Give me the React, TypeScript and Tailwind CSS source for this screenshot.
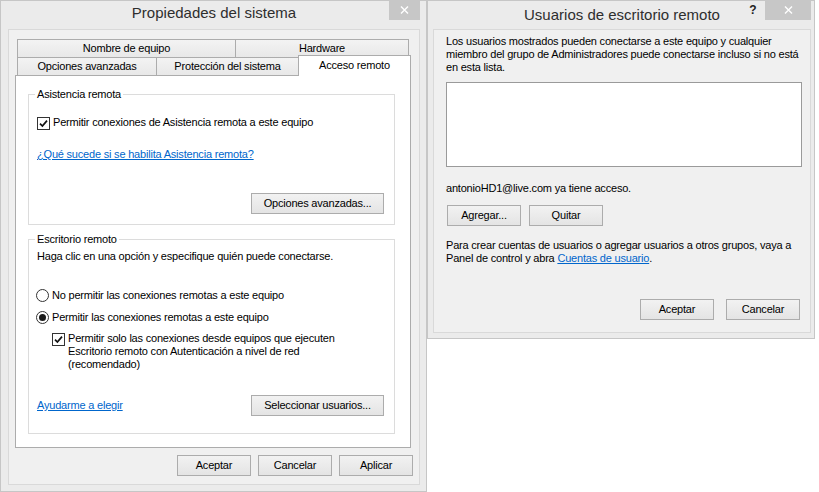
import React from "react";

function Btn({ children, className = "" }: { children: React.ReactNode; className?: string }) {
  return (
    <div
      className={`flex h-[21px] w-[74px] shrink-0 items-center justify-center border border-[#acacac] bg-linear-to-b from-[#f2f2f2] to-[#e4e4e4] leading-[13px] text-black ${className}`}
    >
      {children}
    </div>
  );
}

function CloseBtn({ className = "" }: { className?: string }) {
  return (
    <div className={`flex h-[20px] shrink-0 items-center justify-center bg-[#c7c7c7] ${className}`}>
      <svg width="9" height="8" viewBox="0 0 9 8">
        <path d="M1 0.5L8 7.5M8 0.5L1 7.5" stroke="#ffffff" strokeWidth="1.4" />
      </svg>
    </div>
  );
}

function Check() {
  return (
    <span className="mt-px flex h-[13px] w-[13px] shrink-0 items-center justify-center border border-[#333333] bg-white">
      <svg width="9" height="9" viewBox="0 0 9 9">
        <path d="M1 4.6L3.4 7L8 1.6" stroke="#111111" strokeWidth="1.7" fill="none" />
      </svg>
    </span>
  );
}

function Radio({ on }: { on?: boolean }) {
  return (
    <span className="flex h-[13px] w-[13px] shrink-0 items-center justify-center rounded-full border border-[#333333] bg-white">
      {on && <span className="h-[7px] w-[7px] rounded-full bg-[#1a1a1a]" />}
    </span>
  );
}

function Tab({ children, className = "" }: { children: React.ReactNode; className?: string }) {
  return (
    <div
      className={`flex h-[18px] shrink-0 justify-center border border-b-0 border-[#acacac] bg-linear-to-b from-[#f3f3f3] to-[#e8e8e8] pt-[2px] leading-[13px] ${className}`}
    >
      {children}
    </div>
  );
}

function Group({
  title,
  className = "",
  children,
}: {
  title: string;
  className?: string;
  children: React.ReactNode;
}) {
  return (
    <div className={`flex w-[367px] flex-col border border-[#dcdcdc] ${className}`}>
      <div className="-mt-[7px] ml-[6px] w-fit bg-white px-[2px] leading-[13px]">{title}</div>
      {children}
    </div>
  );
}

export default function App() {
  return (
    <div className="flex h-[492px] w-[819px] items-start overflow-hidden bg-white font-['Liberation_Sans',Arial,sans-serif] text-[11px] tracking-[-0.2px] text-black">
      {/* Left dialog: Propiedades del sistema */}
      <div className="flex h-[492px] w-[427px] shrink-0 flex-col border border-[#c6c6c6] bg-[#ebebeb] pb-[6px] pl-[7px] pr-[6px]">
        <div className="flex h-[28px] shrink-0">
          <div className="w-[31px]" />
          <div className="flex-1 pt-[3px] text-center text-[15px] leading-[17px] tracking-normal text-[#2e2e2e]">
            Propiedades del sistema
          </div>
          <CloseBtn className="-mt-px w-[31px]" />
        </div>
        <div className="flex flex-1 flex-col border border-[#d9d9d9] bg-[#f0f0f0] pb-[8px] pl-[6px] pr-[8px] pt-[9px]">
          {/* tab headers */}
          <div className="flex h-[18px] pl-[2px]">
            <Tab className="w-[219px]">Nombre de equipo</Tab>
            <Tab className="-ml-px w-[174px]">Hardware</Tab>
          </div>
          <div className="flex h-[18px] items-end pl-[2px]">
            <Tab className="w-[140px]">Opciones avanzadas</Tab>
            <Tab className="-ml-px w-[143px]">Protección del sistema</Tab>
            <div className="relative z-10 -mb-px -ml-px flex h-[21px] w-[113px] shrink-0 justify-center border border-b-0 border-[#acacac] bg-white pt-[3px] leading-[13px]">
              Acceso remoto
            </div>
          </div>
          {/* tab panel */}
          <div className="flex h-[373px] flex-col border border-[#acacac] bg-white pl-[12px] pt-[18px]">
            <Group title="Asistencia remota">
              <div className="flex flex-col pb-[10px] pl-[8px] pr-[10px]">
                <div className="mt-[15px] flex items-start gap-[3px] leading-[13px]">
                  <Check />
                  <span>Permitir conexiones de Asistencia remota a este equipo</span>
                </div>
                <div className="mt-[18px] leading-[13px]">
                  <span className="text-[#0066cc] underline">¿Qué sucede si se habilita Asistencia remota?</span>
                </div>
                <div className="mt-[32px] flex justify-end">
                  <Btn className="w-[133px]">Opciones avanzadas...</Btn>
                </div>
              </div>
            </Group>
            <Group title="Escritorio remoto" className="mt-[14px]">
              <div className="flex flex-col pb-[17px] pl-[8px] pr-[10px]">
                <div className="mt-[4px] leading-[13px]">
                  Haga clic en una opción y especifique quién puede conectarse.
                </div>
                <div className="-ml-px mt-[26px] flex items-center gap-[3px] leading-[13px]">
                  <Radio />
                  <span>No permitir las conexiones remotas a este equipo</span>
                </div>
                <div className="-ml-px mt-[9px] flex items-center gap-[3px] leading-[13px]">
                  <Radio on />
                  <span>Permitir las conexiones remotas a este equipo</span>
                </div>
                <div className="ml-[15px] mt-[8px] flex items-start gap-[3px] leading-[13px]">
                  <Check />
                  <span>
                    Permitir solo las conexiones desde equipos que ejecuten
                    <br />
                    Escritorio remoto con Autenticación a nivel de red
                    <br />
                    (recomendado)
                  </span>
                </div>
                <div className="mt-[24px] flex items-center justify-between">
                  <span className="leading-[13px] text-[#0066cc] underline">Ayudarme a elegir</span>
                  <Btn className="w-[133px]">Seleccionar usuarios...</Btn>
                </div>
              </div>
            </Group>
          </div>
          {/* dialog buttons */}
          <div className="-mr-[2px] mt-[7px] flex justify-end gap-[7px]">
            <Btn>Aceptar</Btn>
            <Btn>Cancelar</Btn>
            <Btn>Aplicar</Btn>
          </div>
        </div>
      </div>

      {/* Right dialog: Usuarios de escritorio remoto */}
      <div className="flex h-[339px] w-[388px] shrink-0 flex-col border border-[#c6c6c6] bg-[#ebebeb] pb-[5px] pl-[5px] pr-[3px]">
        <div className="flex h-[28px] shrink-0">
          <div className="w-[64px]" />
          <div className="flex-1 pt-[5px] text-center text-[15px] leading-[17px] tracking-normal text-[#2e2e2e]">
            Usuarios de escritorio remoto
          </div>
          <div className="mr-[6px] w-[12px] pt-[2px] text-center text-[12px] font-bold leading-[14px] tracking-normal text-[#222]">
            ?
          </div>
          <CloseBtn className="-mt-px w-[46px]" />
        </div>
        <div className="flex flex-1 flex-col border border-[#d9d9d9] bg-[#f0f0f0] pb-[12px] pl-[12px] pr-[8px] pt-[5px]">
          <p className="leading-[13px]">
            Los usuarios mostrados pueden conectarse a este equipo y cualquier
            <br />
            miembro del grupo de Administradores puede conectarse incluso si no está
            <br />
            en esta lista.
          </p>
          <div className="mt-[8px] h-[85px] border border-[#9a9a9a] bg-white" />
          <div className="mt-[15px] leading-[13px]">antonioHD1@live.com ya tiene acceso.</div>
          <div className="ml-px mt-[10px] flex gap-[8px]">
            <Btn>Agregar...</Btn>
            <Btn>Quitar</Btn>
          </div>
          <p className="mt-[13px] leading-[13px]">
            Para crear cuentas de usuarios o agregar usuarios a otros grupos, vaya a
            <br />
            Panel de control y abra <span className="text-[#0066cc] underline">Cuentas de usuario</span>.
          </p>
          <div className="mr-[2px] mt-auto flex justify-end gap-[12px]">
            <Btn>Aceptar</Btn>
            <Btn>Cancelar</Btn>
          </div>
        </div>
      </div>
    </div>
  );
}
